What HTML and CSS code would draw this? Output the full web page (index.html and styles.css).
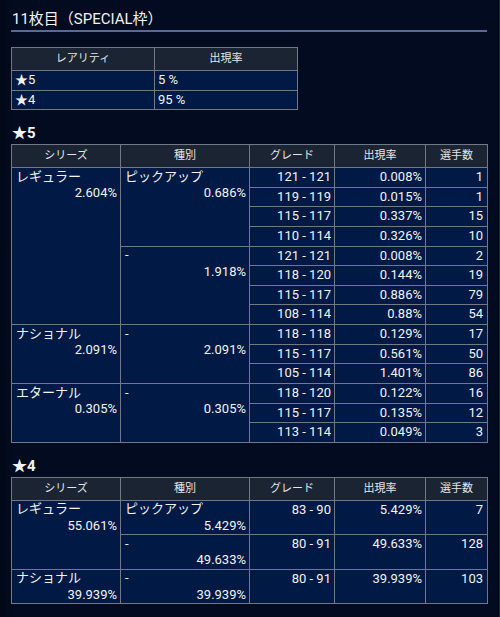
FILE: index.html
```html
<!DOCTYPE html>
<html lang="ja">
<head>
<meta charset="utf-8">
<link rel="stylesheet" href="styles.css">
</head>
<body>
<div class="page">
  <h1 class="title">11枚目（SPECIAL枠）</h1>

  <table class="grid rarity">
    <colgroup><col class="c-half"><col class="c-half"></colgroup>
    <tr><th>レアリティ</th><th>出現率</th></tr>
    <tr><td class="left">★5</td><td class="left">5 %</td></tr>
    <tr><td class="left">★4</td><td class="left">95 %</td></tr>
  </table>

  <h2 class="sec">★5</h2>
  <table class="grid detail">
    <colgroup><col class="c1"><col class="c2"><col class="c3"><col class="c4"><col class="c5"></colgroup>
    <tr><th>シリーズ</th><th>種別</th><th>グレード</th><th>出現率</th><th>選手数</th></tr>
    <tr>
      <td class="group" rowspan="8"><div class="nm">レギュラー</div><div class="pc">2.604%</div></td>
      <td class="group" rowspan="4"><div class="nm">ピックアップ</div><div class="pc">0.686%</div></td>
      <td class="num">121 - 121</td><td class="num">0.008%</td><td class="num">1</td>
    </tr>
    <tr><td class="num">119 - 119</td><td class="num">0.015%</td><td class="num">1</td></tr>
    <tr><td class="num">115 - 117</td><td class="num">0.337%</td><td class="num">15</td></tr>
    <tr><td class="num">110 - 114</td><td class="num">0.326%</td><td class="num">10</td></tr>
    <tr>
      <td class="group" rowspan="4"><div class="nm dash">-</div><div class="pc">1.918%</div></td>
      <td class="num">121 - 121</td><td class="num">0.008%</td><td class="num">2</td>
    </tr>
    <tr><td class="num">118 - 120</td><td class="num">0.144%</td><td class="num">19</td></tr>
    <tr><td class="num">115 - 117</td><td class="num">0.886%</td><td class="num">79</td></tr>
    <tr><td class="num">108 - 114</td><td class="num">0.88%</td><td class="num">54</td></tr>
    <tr>
      <td class="group" rowspan="3"><div class="nm">ナショナル</div><div class="pc">2.091%</div></td>
      <td class="group" rowspan="3"><div class="nm dash">-</div><div class="pc">2.091%</div></td>
      <td class="num">118 - 118</td><td class="num">0.129%</td><td class="num">17</td>
    </tr>
    <tr><td class="num">115 - 117</td><td class="num">0.561%</td><td class="num">50</td></tr>
    <tr><td class="num">105 - 114</td><td class="num">1.401%</td><td class="num">86</td></tr>
    <tr>
      <td class="group" rowspan="3"><div class="nm">エターナル</div><div class="pc">0.305%</div></td>
      <td class="group" rowspan="3"><div class="nm dash">-</div><div class="pc">0.305%</div></td>
      <td class="num">118 - 120</td><td class="num">0.122%</td><td class="num">16</td>
    </tr>
    <tr><td class="num">115 - 117</td><td class="num">0.135%</td><td class="num">12</td></tr>
    <tr><td class="num">113 - 114</td><td class="num">0.049%</td><td class="num">3</td></tr>
  </table>

  <h2 class="sec sec-2">★4</h2>
  <table class="grid detail">
    <colgroup><col class="c1"><col class="c2"><col class="c3"><col class="c4"><col class="c5"></colgroup>
    <tr><th>シリーズ</th><th>種別</th><th>グレード</th><th>出現率</th><th>選手数</th></tr>
    <tr class="tall">
      <td class="group" rowspan="2"><div class="nm">レギュラー</div><div class="pc">55.061%</div></td>
      <td class="group"><div class="nm">ピックアップ</div><div class="pc">5.429%</div></td>
      <td class="num">83 - 90</td><td class="num">5.429%</td><td class="num">7</td>
    </tr>
    <tr class="tall">
      <td class="group"><div class="nm dash">-</div><div class="pc">49.633%</div></td>
      <td class="num">80 - 91</td><td class="num">49.633%</td><td class="num">128</td>
    </tr>
    <tr class="tall">
      <td class="group"><div class="nm">ナショナル</div><div class="pc">39.939%</div></td>
      <td class="group"><div class="nm dash">-</div><div class="pc">39.939%</div></td>
      <td class="num">80 - 91</td><td class="num">39.939%</td><td class="num">103</td>
    </tr>
  </table>
</div>
</body>
</html>
```

FILE: styles.css
```css
html, body {
  margin: 0;
  padding: 0;
}

body {
  width: 499px;
  min-height: 617px;
  background: linear-gradient(90deg, #010817 0px, #020b1f 14px, #020b1f 100%);
  border-right: 1px solid #1b2232;
  color: #f2f2f2;
  font-family: Roboto, "Noto Sans CJK JP", sans-serif;
}

.page {
  padding: 8px 12px 0 11px;
}

.title {
  margin: 0;
  padding-left: 1px;
  font-size: 15px;
  font-weight: 400;
  line-height: 22px;
  border-bottom: 2px solid #5a6996;
}

.grid {
  border-collapse: collapse;
  table-layout: fixed;
}

.grid th,
.grid td {
  border: 1px solid #737885;
  padding: 0 4px;
}

.grid th {
  background: #1b2433;
  font-size: 11px;
  font-weight: 400;
  line-height: 22px;
  text-align: center;
  color: #e6e6e6;
}

.grid td {
  background: #011a45;
  font-size: 13px;
  vertical-align: top;
}

.rarity {
  width: 286px;
  margin-top: 15px;
}

.c-half { width: 143px; }

.rarity td {
  line-height: 18.5px;
}

.rarity .left {
  text-align: left;
  padding-left: 3px;
}

.sec {
  margin: 12px 0 0 1px;
  font-size: 15px;
  font-weight: 700;
  line-height: 22px;
}

.detail {
  width: 476px;
}

.c1 { width: 109px; }
.c2 { width: 129px; }
.c3 { width: 85px; }
.c4 { width: 91px; }
.c5 { width: 62px; }

.detail td.num {
  text-align: right;
  line-height: 18.64px;
  padding-right: 3px;
}

.detail td.num:last-child {
  padding-right: 4px;
}

.detail td.group {
  padding: 0 3px 0 4px;
}

.group .nm {
  line-height: 16.5px;
  padding-top: 0.5px;
}

.group .pc {
  line-height: 16.5px;
  text-align: right;
}

.detail tr.tall td {
  height: 33px;
}

.detail tr.tall td.num {
  line-height: 18px;
}
```
